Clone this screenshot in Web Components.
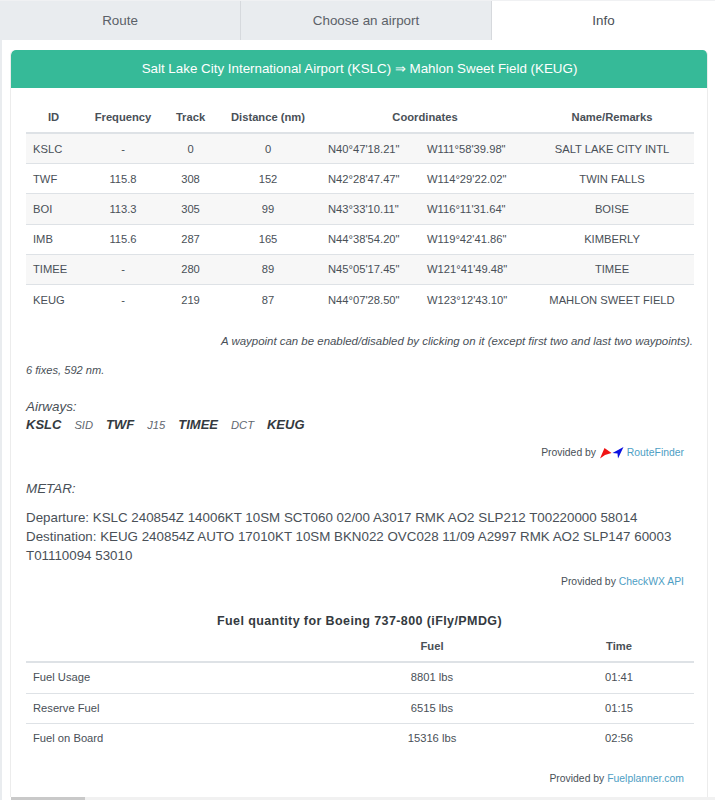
<!DOCTYPE html>
<html lang="en">
<head>
<meta charset="utf-8">
<title>Info</title>
<style>
    html, body { margin: 0; height: 800px; overflow: hidden; background: #e9ecef; }
    body { font-family: "Liberation Sans", Arial, sans-serif; color: #495057; }
</style>
</head>
<body>
<flight-tabs>
    <tab-item>Route</tab-item>
    <tab-item>Choose an airport</tab-item>
    <tab-item active>Info</tab-item>
</flight-tabs>
<info-pane>
    <route-card title="Salt Lake City International Airport (KSLC) ⇒ Mahlon Sweet Field (KEUG)">
        <route-table></route-table>
        <p class="hint">A waypoint can be enabled/disabled by clicking on it (except first two and last two waypoints).</p>
        <p class="fixes">6 fixes, 592 nm.</p>
        <air-ways></air-ways>
        <provided-by top="11" gap="20">Provided by <plane-logo></plane-logo> <a>RouteFinder</a></provided-by>
        <metar-box></metar-box>
        <provided-by gap="23">Provided by <a>CheckWX API</a></provided-by>
        <fuel-table></fuel-table>
        <provided-by top="19">Provided by <a>Fuelplanner.com</a></provided-by>
    </route-card>
    <scroll-strip></scroll-strip>
</info-pane>
<script>
class FlightTabs extends HTMLElement {
    constructor() {
        super();
        this.attachShadow({ mode: 'open' });
    }
    connectedCallback() {
        this.shadowRoot.innerHTML = `
        <style>
            :host { display: grid; grid-template-columns: 241px 251px 1fr; height: 40px; padding-top: 1px; box-sizing: border-box; background: #f0f1f3; }
        </style>
        <slot></slot>`;
    }
}
class TabItem extends HTMLElement {
    constructor() {
        super();
        this.attachShadow({ mode: 'open' });
    }
    connectedCallback() {
        this.shadowRoot.innerHTML = `
        <style>
            :host { display: flex; align-items: center; justify-content: center; font-size: 13.4px; color: #5b6168; background: #e9ecef; border-right: 1px solid #d6d9dd; }
            :host([active]) { background: #fff; border-right: 0; color: #495057; }
        </style>
        <slot></slot>`;
    }
}
class InfoPane extends HTMLElement {
    constructor() {
        super();
        this.attachShadow({ mode: 'open' });
    }
    connectedCallback() {
        this.shadowRoot.innerHTML = `
        <style>
            :host { display: block; margin-left: 2px; padding: 10px 0 0 8px; background: #fff; height: 760px; box-sizing: border-box; }
        </style>
        <slot></slot>`;
    }
}
class RouteCard extends HTMLElement {
    constructor() {
        super();
        this.attachShadow({ mode: 'open' });
    }
    connectedCallback() {
        this.shadowRoot.innerHTML = `
        <style>
            :host { display: block; height: 747px; width: 698px; box-sizing: border-box; overflow: hidden; border-left: 1px solid #ececec; border-right: 1px solid #ececec; border-radius: 5px 5px 0 0; font-size: 11.2px; }
            header { height: 38px; line-height: 38px; margin: 0 -1px 0 0; text-align: center; font-size: 13.36px; color: #fff; background: #36ba98; border-radius: 5px 5px 0 0; }
            .body { padding: 12px 14px 0 15px; }
            ::slotted(.hint) { margin: 18px 0 0; text-align: right; font-style: italic; font-size: 11.45px; line-height: 18px; }
            ::slotted(.fixes) { margin: 11px 0 0; font-style: italic; font-size: 11.1px; line-height: 18px; }
        </style>
        <header>${this.getAttribute('title')}</header>
        <div class="body"><slot></slot></div>`;
    }
}
class ScrollStrip extends HTMLElement {
    constructor() {
        super();
        this.attachShadow({ mode: 'open' });
    }
    connectedCallback() {
        this.shadowRoot.innerHTML = `
        <style>
            :host { display: block; height: 3px; margin-left: 1px; background: #f1f1f1; }
            div { width: 74px; height: 100%; background: #c9c9c9; }
        </style>
        <div></div>`;
    }
}
class RouteTable extends HTMLElement {
    constructor() {
        super();
        this.attachShadow({ mode: 'open' });
    }
    connectedCallback() {
        const rows = [
            ['KSLC', '-', '0', '0', 'N40°47\'18.21"', 'W111°58\'39.98"', 'SALT LAKE CITY INTL'],
            ['TWF', '115.8', '308', '152', 'N42°28\'47.47"', 'W114°29\'22.02"', 'TWIN FALLS'],
            ['BOI', '113.3', '305', '99', 'N43°33\'10.11"', 'W116°11\'31.64"', 'BOISE'],
            ['IMB', '115.6', '287', '165', 'N44°38\'54.20"', 'W119°42\'41.86"', 'KIMBERLY'],
            ['TIMEE', '-', '280', '89', 'N45°05\'17.45"', 'W121°41\'49.48"', 'TIMEE'],
            ['KEUG', '-', '219', '87', 'N44°07\'28.50"', 'W123°12\'43.10"', 'MAHLON SWEET FIELD']
        ];
        this.shadowRoot.innerHTML = `
        <style>
            :host { display: block; }
            table { width: 668px; table-layout: fixed; border-collapse: collapse; font-size: 11.2px; color: #495057; }
            th { height: 30px; padding: 2px 0 0; font-weight: bold; text-align: center; border-bottom: 2px solid #dee2e6; }
            td { height: 29.2px; padding: 0; text-align: center; border-bottom: 1px solid #dee2e6; }
            tr:last-child td { border-bottom: 0; }
            tbody tr:nth-child(odd) { background: #f7f7f7; }
            td:first-child { text-align: left; padding-left: 7px; }
            td:nth-child(5), td:nth-child(6) { text-align: left; padding-left: 8px; }
        </style>
        <table>
            <colgroup><col style="width:55px"><col style="width:84px"><col style="width:51px"><col style="width:104px"><col style="width:99px"><col style="width:111px"><col></colgroup>
            <thead><tr><th>ID</th><th>Frequency</th><th>Track</th><th>Distance (nm)</th><th colspan="2">Coordinates</th><th>Name/Remarks</th></tr></thead>
            <tbody>${rows.map(r => `<tr>${r.map(c => `<td>${c}</td>`).join('')}</tr>`).join('')}</tbody>
        </table>`;
    }
}
class AirWays extends HTMLElement {
    constructor() {
        super();
        this.attachShadow({ mode: 'open' });
    }
    connectedCallback() {
        this.shadowRoot.innerHTML = `
        <style>
            :host { display: block; margin-top: 20px; font-style: italic; }
            .label { font-size: 13.4px; line-height: 16px; }
            .line { display: flex; align-items: baseline; gap: 13px; line-height: 19px; }
            b { font-size: 13px; color: #343a40; }
            span { font-size: 11.2px; color: #5f6770; }
        </style>
        <div class="label">Airways:</div>
        <div class="line"><b>KSLC</b><span>SID</span><b>TWF</b><span>J15</span><b>TIMEE</b><span>DCT</span><b>KEUG</b></div>`;
    }
}
class ProvidedBy extends HTMLElement {
    constructor() {
        super();
        this.attachShadow({ mode: 'open' });
    }
    connectedCallback() {
        this.shadowRoot.innerHTML = `
        <style>
            :host { display: block; text-align: right; font-size: 10.4px; line-height: 14px; padding-right: 9px; margin-top: ${this.getAttribute('top') || 0}px; margin-bottom: ${this.getAttribute('gap') || 0}px; color: #495057; }
            ::slotted(a) { color: #4d9ec4; }
        </style>
        <slot></slot>`;
    }
}
class PlaneLogo extends HTMLElement {
    constructor() {
        super();
        this.attachShadow({ mode: 'open' });
    }
    connectedCallback() {
        this.shadowRoot.innerHTML = `
        <style>
            :host { display: inline-block; vertical-align: middle; margin: 0 0 0 1px; height: 12px; }
            svg { display: block; }
        </style>
        <svg width="24" height="12" viewBox="0 0 24 12">
            <path d="M0 11.5 L4.5 1 L11.5 6 L5 8 Z" fill="#f01414"/>
            <path d="M23.5 0 L18 11.5 L17.5 6.5 L12.5 6 Z" fill="#0a10e0"/>
        </svg>`;
    }
}
class MetarBox extends HTMLElement {
    constructor() {
        super();
        this.attachShadow({ mode: 'open' });
    }
    connectedCallback() {
        this.shadowRoot.innerHTML = `
        <style>
            :host { display: block; font-size: 13.35px; line-height: 19px; }
            h4 { margin: 0 0 10px; font: italic 13.4px/18px "Liberation Sans", Arial, sans-serif; }
            p { margin: 0 0 10px; }
        </style>
        <h4>METAR:</h4>
        <p>Departure: KSLC 240854Z 14006KT 10SM SCT060 02/00 A3017 RMK AO2 SLP212 T00220000 58014<br>Destination: KEUG 240854Z AUTO 17010KT 10SM BKN022 OVC028 11/09 A2997 RMK AO2 SLP147 60003 T01110094 53010</p>`;
    }
}
class FuelTable extends HTMLElement {
    constructor() {
        super();
        this.attachShadow({ mode: 'open' });
    }
    connectedCallback() {
        const rows = [
            ['Fuel Usage', '8801 lbs', '01:41'],
            ['Reserve Fuel', '6515 lbs', '01:15'],
            ['Fuel on Board', '15316 lbs', '02:56']
        ];
        this.shadowRoot.innerHTML = `
        <style>
            :host { display: block; }
            h4 { margin: 0 0 1px; text-align: center; font-size: 12.5px; line-height: 18px; letter-spacing: .4px; color: #343a40; }
            table { width: 668px; table-layout: fixed; border-collapse: collapse; font-size: 11.2px; }
            th { height: 30px; padding: 0; text-align: center; border-bottom: 2px solid #dee2e6; }
            td { height: 28.4px; padding: 0 0 1px; text-align: center; border-bottom: 1px solid #dee2e6; }
            tr:last-child td { border-bottom: 0; }
            td:first-child { text-align: left; padding-left: 7px; }
        </style>
        <h4>Fuel quantity for Boeing 737-800 (iFly/PMDG)</h4>
        <table>
            <colgroup><col style="width:294px"><col style="width:224px"><col></colgroup>
            <thead><tr><th></th><th>Fuel</th><th>Time</th></tr></thead>
            <tbody>${rows.map(r => `<tr>${r.map(c => `<td>${c}</td>`).join('')}</tr>`).join('')}</tbody>
        </table>`;
    }
}
customElements.define('flight-tabs', FlightTabs);
customElements.define('tab-item', TabItem);
customElements.define('info-pane', InfoPane);
customElements.define('route-card', RouteCard);
customElements.define('scroll-strip', ScrollStrip);
customElements.define('route-table', RouteTable);
customElements.define('air-ways', AirWays);
customElements.define('provided-by', ProvidedBy);
customElements.define('plane-logo', PlaneLogo);
customElements.define('metar-box', MetarBox);
customElements.define('fuel-table', FuelTable);
</script>
</body>
</html>
